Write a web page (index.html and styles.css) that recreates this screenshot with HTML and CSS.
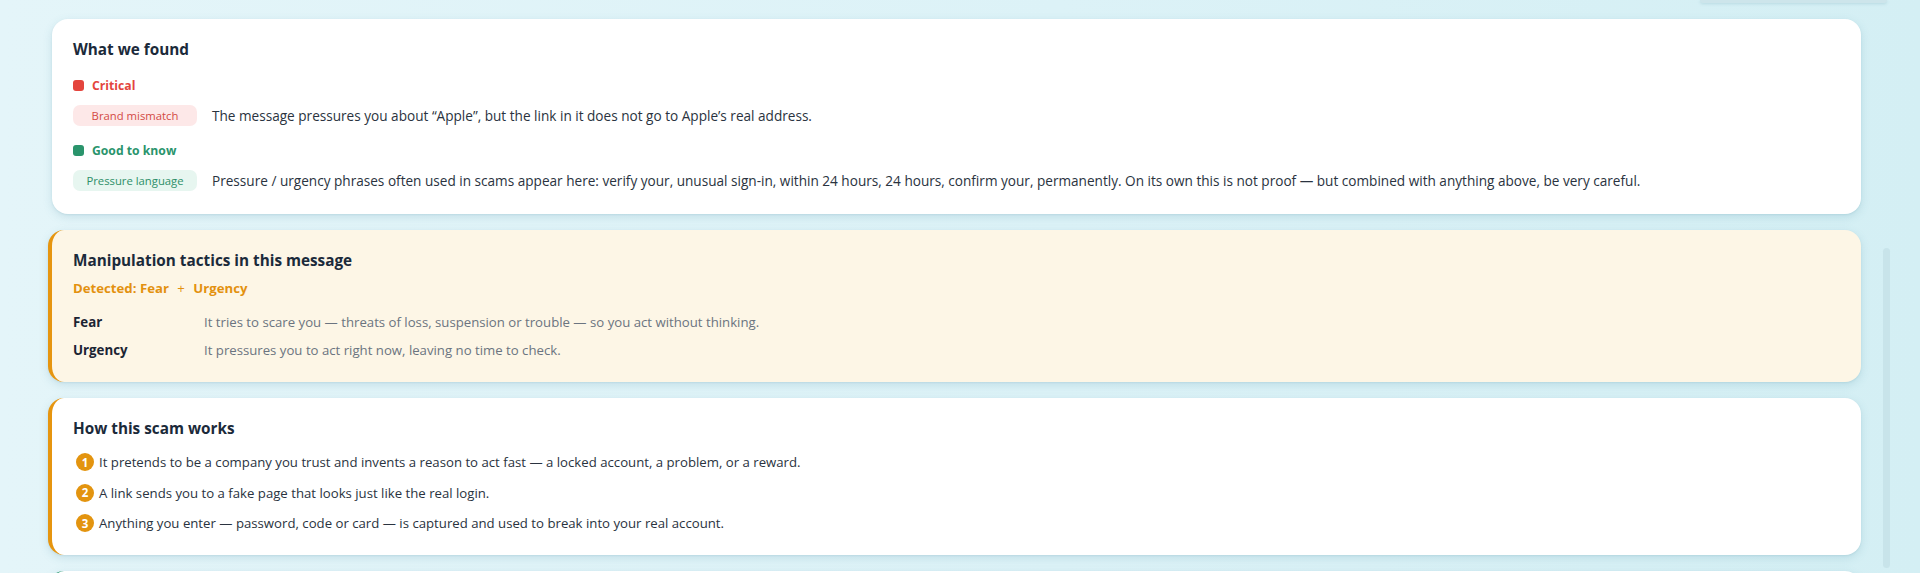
FILE: index.html
```html
<!DOCTYPE html>
<html lang="en">
<head>
<meta charset="utf-8">
<title>Message check – results</title>
<link rel="stylesheet" href="styles.css">
</head>
<body>
<div class="topbar"><span class="topbar-tab"></span></div>
<div class="layout">
  <main class="results">
    <section class="card">
      <h2 class="card-title">What we found</h2>
      <div class="group">
        <div class="severity severity-critical"><span class="severity-dot"></span>Critical</div>
        <div class="finding">
          <span class="tag tag-critical">Brand mismatch</span>
          <p class="finding-text">The message pressures you about “Apple”, but the link in it does not go to Apple’s real address.</p>
        </div>
      </div>
      <div class="group">
        <div class="severity severity-info"><span class="severity-dot"></span>Good to know</div>
        <div class="finding">
          <span class="tag tag-info">Pressure language</span>
          <p class="finding-text">Pressure / urgency phrases often used in scams appear here: verify your, unusual sign-in, within 24 hours, 24 hours, confirm your, permanently. On its own this is not proof — but combined with anything above, be very careful.</p>
        </div>
      </div>
    </section>

    <section class="card card-accent card-warm">
      <h2 class="card-title">Manipulation tactics in this message</h2>
      <p class="detected">Detected: Fear <span class="detected-plus">+</span> Urgency</p>
      <dl class="tactics">
        <dt>Fear</dt>
        <dd>It tries to scare you — threats of loss, suspension or trouble — so you act without thinking.</dd>
        <dt>Urgency</dt>
        <dd>It pressures you to act right now, leaving no time to check.</dd>
      </dl>
    </section>

    <section class="card card-accent">
      <h2 class="card-title">How this scam works</h2>
      <ol class="steps">
        <li class="step"><span class="step-num">1</span>It pretends to be a company you trust and invents a reason to act fast — a locked account, a problem, or a reward.</li>
        <li class="step"><span class="step-num">2</span>A link sends you to a fake page that looks just like the real login.</li>
        <li class="step"><span class="step-num">3</span>Anything you enter — password, code or card — is captured and used to break into your real account.</li>
      </ol>
    </section>

    <div class="card card-accent card-safe card-next"></div>
  </main>
  <aside class="gutter"><div class="scroll-track"></div></aside>
</div>
</body>
</html>
```

FILE: styles.css
```css
html, body {
  margin: 0;
  padding: 0;
  height: 100%;
  overflow: hidden;
}

body {
  font-family: "Open Sans", "Noto Sans", "Liberation Sans", sans-serif;
  color: #2a3340;
  background: linear-gradient(90deg, #e4f5f9 0%, #dcf2f7 55%, #d4eff4 100%);
}

/* strip above the results with the tab edge on the right */
.topbar {
  display: flex;
  justify-content: flex-end;
  height: 3px;
  padding-right: 33px;
}

.topbar-tab {
  width: 187px;
  height: 3px;
  background: #cde5eb;
  border-radius: 0 0 8px 8px;
  box-shadow: 0 1px 3px rgba(90, 150, 170, 0.25);
}

.layout {
  display: flex;
  align-items: flex-start;
}

.results {
  flex: 1;
  display: flex;
  flex-direction: column;
  gap: 16px;
  padding: 16px 0 0 48px;
}

.gutter {
  width: 59px;
  flex: none;
  padding: 245px 0 0 22px;
  box-sizing: border-box;
}

.scroll-track {
  width: 7px;
  height: 320px;
  border-radius: 4px;
  background: #c8e4ea;
}

/* cards */
.card {
  margin-left: 4px;
  background: #ffffff;
  border-radius: 16px;
  padding: 20px 21px 23px;
  box-shadow: 0 3px 10px rgba(70, 140, 160, 0.18), 0 1px 2px rgba(70, 140, 160, 0.12);
}

.card-accent {
  margin-left: 0;
  border-left: 4px solid #e6950f;
}

.card-warm {
  background: #fdf6e6;
  padding-bottom: 24px;
}

.card-safe {
  border-left-color: #2b9970;
}

.card-next {
  height: 60px;
}

.card-title {
  margin: 0;
  font-size: 15.3px;
  line-height: 20px;
  font-weight: 700;
  color: #1b2a3a;
}

/* findings */
.group {
  margin-top: 16px;
}

.card-title + .group {
  margin-top: 18px;
}

.severity {
  display: flex;
  align-items: center;
  gap: 8px;
  height: 16px;
  font-size: 12.2px;
  font-weight: 700;
}

.severity-dot {
  width: 11px;
  height: 11px;
  border-radius: 3px;
  background: currentColor;
}

.severity-critical { color: #e4453d; }
.severity-info { color: #2a946c; }

.finding {
  display: flex;
  align-items: center;
  gap: 15px;
  margin-top: 12px;
}

.tag {
  flex: none;
  width: 124px;
  height: 21px;
  border-radius: 7px;
  display: flex;
  align-items: center;
  justify-content: center;
  font-size: 11.3px;
}

.tag-critical {
  background: #fde8e8;
  color: #d34a44;
}

.tag-info {
  background: #e7f6f0;
  color: #2d8f68;
}

.finding-text {
  margin: 0;
  font-size: 13.6px;
  line-height: 18px;
  color: #2a3340;
}

/* tactics */
.detected {
  margin: 10px 0 0;
  font-size: 13.2px;
  line-height: 16px;
  font-weight: 700;
  color: #e3910f;
}

.detected-plus {
  font-weight: 400;
  margin: 0 5px;
}

.tactics {
  display: grid;
  grid-template-columns: 131px 1fr;
  row-gap: 12px;
  margin: 18px 0 0;
}

.tactics dt {
  font-size: 13.3px;
  line-height: 16px;
  font-weight: 700;
  color: #1b2433;
}

.tactics dd {
  margin: 0;
  font-size: 13.2px;
  line-height: 16px;
  color: #6b7480;
}

/* steps */
.steps {
  list-style: none;
  margin: 15px 0 0;
  padding: 0 0 0 3px;
  display: flex;
  flex-direction: column;
  gap: 12.5px;
}

.step {
  display: flex;
  align-items: center;
  gap: 5px;
  height: 18px;
  font-size: 13.2px;
  color: #2a3340;
}

.step-num {
  flex: none;
  width: 18px;
  height: 18px;
  border-radius: 50%;
  background: #e3940f;
  color: #ffffff;
  font-size: 11.5px;
  font-weight: 700;
  display: flex;
  align-items: center;
  justify-content: center;
}
```
